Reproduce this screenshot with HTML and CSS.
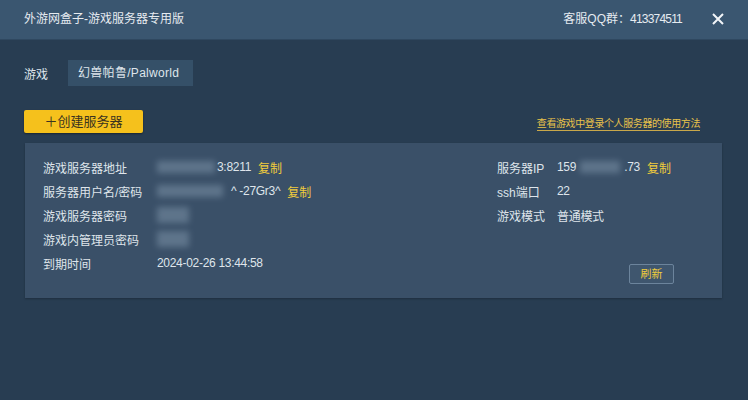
FILE: index.html
```html
<!DOCTYPE html>
<html lang="zh-cn">
<head>
    <meta charset="UTF-8">
    <title>外游网盒子</title>
    <link rel="stylesheet" href="styles.css">
</head>
<body>
    <div class="janela">
        <div class="barraTitulo">
            <span class="titulo">外游网盒子-游戏服务器专用版</span>
            <span class="qq">客服QQ群：<span class="num">413374511</span></span>
            <span class="fechar">
                <svg width="12" height="12" viewBox="0 0 12 12"><path d="M1 1L11 11M11 1L1 11" stroke="#f2f5f8" stroke-width="2"/></svg>
            </span>
        </div>
        <div class="conteudo">
            <div class="linhaJogo">
                <span class="rotulo">游戏</span>
                <span class="caixaJogo">幻兽帕鲁/Palworld</span>
            </div>
            <div class="linhaAcoes">
                <span class="botaoCriar">＋创建服务器</span>
                <span class="link">查看游戏中登录个人服务器的使用方法</span>
            </div>
            <div class="painel">
                <div class="coluna">
                    <div class="linha"><span class="chave">游戏服务器地址</span><span class="valor"><span class="borrao b1"></span>3:8211<span class="copiar">复制</span></span></div>
                    <div class="linha"><span class="chave">服务器用户名/密码</span><span class="valor"><span class="borrao b2"></span>^ -27Gr3^<span class="copiar">复制</span></span></div>
                    <div class="linha"><span class="chave">游戏服务器密码</span><span class="valor"><span class="borrao b3"></span></span></div>
                    <div class="linha"><span class="chave">游戏内管理员密码</span><span class="valor"><span class="borrao b3"></span></span></div>
                    <div class="linha"><span class="chave">到期时间</span><span class="valor">2024-02-26 13:44:58</span></div>
                </div>
                <div class="colunaDir">
                    <div class="linha"><span class="chave2">服务器IP</span><span class="valor">159<span class="borrao b4"></span>.73<span class="copiar">复制</span></span></div>
                    <div class="linha"><span class="chave2">ssh端口</span><span class="valor">22</span></div>
                    <div class="linha"><span class="chave2">游戏模式</span><span class="valor">普通模式</span></div>
                    <div class="espaco"></div>
                    <div class="linhaBotao"><span class="botaoAtualizar">刷新</span></div>
                </div>
            </div>
        </div>
    </div>
</body>
</html>
```

FILE: styles.css
```css
body{
    margin: 0;
    background-color: #283d52;
    font-family: "Liberation Sans", "Noto Sans CJK SC", sans-serif;
    font-size: 12px;
    color: #dfe5eb;
}
.janela{
    width: 748px;
    height: 400px;
    background-color: #283d52;
}
.barraTitulo{
    height: 40px;
    background-color: #3a5670;
    display: flex;
    align-items: center;
    padding: 0 24px 5px 24px;
    border-bottom: 1px solid #2f4860;
    box-sizing: border-box;
}
.titulo{
    flex: 1;
    color: #e6ebf0;
}
.qq{
    color: #e6ebf0;
}
.num{
    letter-spacing: -0.8px;
}
.fechar{
    margin-left: 30px;
    width: 12px;
    height: 12px;
    display: flex;
    margin-top: 4px;
}
.conteudo{
    padding: 20px 26px 0 24px;
}
.linhaJogo{
    display: flex;
    align-items: center;
}
.rotulo{
    width: 44px;
}
.caixaJogo{
    background-color: #355068;
    height: 26px;
    line-height: 26px;
    padding: 0 14px 0 10px;
    letter-spacing: 0.3px;
}
.linhaAcoes{
    display: flex;
    justify-content: space-between;
    align-items: center;
    margin-top: 24px;
}
.botaoCriar{
    background-color: #f5c11c;
    color: #3a3320;
    width: 119px;
    height: 23px;
    line-height: 23px;
    text-align: center;
    border-radius: 2px;
    box-shadow: 0 1px 2px rgba(0,0,0,0.4);
    font-size: 13px;
}
.link{
    color: #e8c24a;
    font-size: 10px;
    letter-spacing: -0.4px;
    border-bottom: 1px solid #c9a84a;
    margin-right: 22px;
    margin-top: 3px;
}
.painel{
    margin-top: 10px;
    margin-left: 1px;
    height: 155px;
    background-color: #3a5068;
    display: flex;
    padding: 12px 0 0 18px;
    box-sizing: border-box;
    box-shadow: 0 1px 2px rgba(0,0,0,0.25);
}
.coluna{
    width: 454px;
}
.colunaDir{
    display: flex;
    flex-direction: column;
}
.linha{
    height: 24px;
    display: flex;
    align-items: center;
}
.chave{
    width: 114px;
}
.chave2{
    width: 60px;
}
.valor{
    display: flex;
    align-items: center;
    letter-spacing: -0.3px;
}
.copiar{
    color: #f0cc3c;
    margin-left: 7px;
    letter-spacing: 0;
}
.borrao{
    display: inline-block;
    height: 12px;
    background-color: #6e849a;
    filter: blur(3px);
    opacity: 0.7;
}
.b1{ width: 58px; margin-right: 2px; }
.b2{ width: 66px; margin-right: 8px; }
.b3{ width: 32px; height: 16px; }
.b4{ width: 40px; margin: 0 4px; }
.espaco{
    height: 37px;
}
.linhaBotao{
    padding-left: 132px;
}
.botaoAtualizar{
    display: inline-block;
    width: 43px;
    height: 18px;
    line-height: 18px;
    text-align: center;
    border: 1px solid #6c849c;
    border-radius: 2px;
    background-color: #3f566e;
    color: #f0cc3c;
    font-size: 11px;
}
```
